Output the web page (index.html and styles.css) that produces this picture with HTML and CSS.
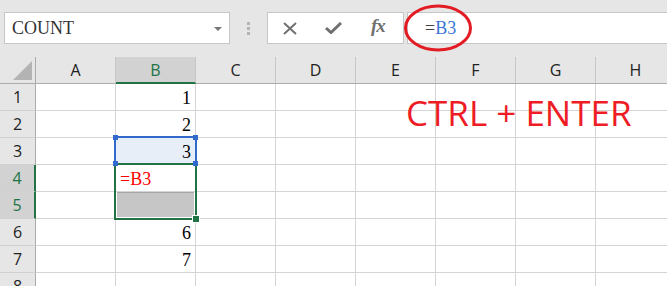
FILE: index.html
```html
<!DOCTYPE html>
<html lang="zh-Hant">
<head>
  <meta charset="UTF-8">
  <title>COUNT</title>
  <link rel="stylesheet" href="styles.css">
</head>
<body>
<div class="toolbar">
  <div class="namebox"><span class="name">COUNT</span><span class="caret"></span></div>
  <div class="grip"><i></i><i></i><i></i></div>
  <div class="fbtns">
    <svg class="icon" width="14" height="13" viewBox="0 0 14 13"><path d="M1 1 L13 12 M13 1 L1 12" stroke="#707070" stroke-width="2" fill="none"/></svg>
    <svg class="icon" width="17" height="12" viewBox="0 0 17 12"><path d="M1 6 L6 10.5 L16 1" stroke="#707070" stroke-width="3" fill="none"/></svg>
    <span class="fx">fx</span>
  </div>
  <div class="fbox"><span class="eq">=</span><span class="ref">B3</span></div>
  <svg class="ring" width="72" height="52" viewBox="0 0 72 52"><ellipse cx="36" cy="25" rx="32.5" ry="22" stroke="#e31b23" stroke-width="3" fill="none"/></svg>
</div>

<div class="sheet">
  <div class="corner"><span class="tri"></span></div>
  <div class="colhead">A</div>
  <div class="colhead on">B</div>
  <div class="colhead">C</div>
  <div class="colhead">D</div>
  <div class="colhead">E</div>
  <div class="colhead">F</div>
  <div class="colhead">G</div>
  <div class="colhead">H</div>

  <div class="rowhead">1</div><div class="cell"></div><div class="cell num">1</div><div class="cell"></div><div class="cell"></div><div class="cell"></div><div class="cell"></div><div class="cell"></div><div class="cell"></div>
  <div class="rowhead">2</div><div class="cell"></div><div class="cell num">2</div><div class="cell"></div><div class="cell"></div><div class="cell"></div><div class="cell"></div><div class="cell"></div><div class="cell"></div>
  <div class="rowhead">3</div><div class="cell"></div><div class="cell num active">3</div><div class="cell"></div><div class="cell"></div><div class="cell"></div><div class="cell"></div><div class="cell"></div><div class="cell"></div>
  <div class="rowhead on">4</div><div class="cell"></div><div class="cell edit">=B3</div><div class="cell"></div><div class="cell"></div><div class="cell"></div><div class="cell"></div><div class="cell"></div><div class="cell"></div>
  <div class="rowhead on">5</div><div class="cell"></div><div class="cell"><span class="shade"></span></div><div class="cell"></div><div class="cell"></div><div class="cell"></div><div class="cell"></div><div class="cell"></div><div class="cell"></div>
  <div class="rowhead">6</div><div class="cell"></div><div class="cell num">6</div><div class="cell"></div><div class="cell"></div><div class="cell"></div><div class="cell"></div><div class="cell"></div><div class="cell"></div>
  <div class="rowhead">7</div><div class="cell"></div><div class="cell num">7</div><div class="cell"></div><div class="cell"></div><div class="cell"></div><div class="cell"></div><div class="cell"></div><div class="cell"></div>
  <div class="rowhead">8</div><div class="cell"></div><div class="cell"></div><div class="cell"></div><div class="cell"></div><div class="cell"></div><div class="cell"></div><div class="cell"></div><div class="cell"></div>

  <!-- selection frames -->
  <div class="frame-blue"></div>
  <div class="frame-green"></div>
  <span class="knob k1"></span>
  <span class="knob k2"></span>
  <span class="knob k3"></span>
  <span class="knob k4"></span>
  <span class="knob fillk"></span>

  <div class="note">CTRL + ENTER</div>
</div>
</body>
</html>
```

FILE: styles.css
```css
*{margin: 0;padding: 0;box-sizing: border-box;}
body{
  width: 667px;
  height: 286px;
  overflow: hidden;
  background: #fff;
  font-family: "Liberation Serif", serif;
}

/* 上方工具列 */
.toolbar{
  position: relative;
  height: 57px;
  background: #e6e6e6;
  display: flex;
  align-items: flex-start;
  padding: 12px 0 0 4px;
}
.namebox{
  width: 226px;
  height: 32px;
  background: #fff;
  border: 1px solid #c6c6c6;
  display: flex;
  align-items: center;
  justify-content: space-between;
  padding: 0 7px 0 7px;
}
.name{
  font-size: 18px;
  color: #333;
}
.caret{
  border-left: 4px solid transparent;
  border-right: 4px solid transparent;
  border-top: 4px solid #777;
  margin-top: 1px;
}
.grip{
  width: 37px;
  height: 32px;
  display: flex;
  flex-direction: column;
  align-items: center;
  justify-content: center;
  gap: 2px;
}
.grip i{
  width: 3px;
  height: 3px;
  background: #b4b4b4;
}
.fbtns{
  width: 137px;
  height: 32px;
  background: #fff;
  border: 1px solid #c6c6c6;
  display: flex;
  align-items: center;
  padding-left: 15px;
  gap: 28px;
}
.fx{
  font-style: italic;
  font-size: 19px;
  color: #707070;
  font-weight: bold;
  letter-spacing: -1px;
  margin-top: -4px;
  margin-left: 1px;
}
.fbox{
  flex: 1;
  height: 32px;
  margin-left: 3px;
  background: #fff;
  border: 1px solid #c6c6c6;
  border-right: none;
  padding-left: 17px;
  font-size: 18px;
  line-height: 30px;
}
.eq{ color: #444; }
.ref{ color: #3a76d6; }
.ring{
  position: absolute;
  left: 402px;
  top: 3px;
}

/* 表格 */
.sheet{
  position: relative;
  display: grid;
  grid-template-columns: 36px repeat(8, 80px);
  grid-template-rows: repeat(9, 27px);
}
.corner{
  background: #e6e6e6;
  border-right: 1px solid #ababab;
  border-bottom: 1px solid #ababab;
  position: relative;
}
.tri{
  position: absolute;
  right: 3px;
  bottom: 3px;
  border-left: 19px solid transparent;
  border-bottom: 19px solid #b3b3b3;
}
.colhead{
  background: #e6e6e6;
  border-right: 1px solid #c6c6c6;
  border-bottom: 1px solid #ababab;
  font-family: "Open Sans", sans-serif;
  font-size: 16px;
  color: #222;
  text-align: center;
  line-height: 27px;
}
.colhead.on{
  background: #d2d2d2;
  color: #217346;
  border-bottom: 2px solid #217346;
}
.rowhead{
  background: #e6e6e6;
  border-right: 1px solid #ababab;
  border-bottom: 1px solid #d0d0d0;
  font-family: "Open Sans", sans-serif;
  font-size: 16px;
  color: #222;
  text-align: center;
  line-height: 26px;
}
.rowhead.on{
  background: #d2d2d2;
  color: #217346;
  border-right: 2px solid #217346;
}
.cell{
  border-right: 1px solid #d4d4d4;
  border-bottom: 1px solid #d4d4d4;
  font-size: 18px;
  line-height: 28px;
  position: relative;
}
.num{
  text-align: right;
  padding-right: 4px;
}
.active{
  background: #e8eef8;
}
.edit{
  color: #f00;
  padding-left: 4px;
}
.shade{
  position: absolute;
  left: 1px;
  right: 1px;
  top: 0;
  bottom: 1px;
  background: #c6c6c6;
  border-top: 1px solid #a6a6a6;
}

/* 選取框 */
.frame-blue{
  position: absolute;
  left: 114px;
  top: 79px;
  width: 83px;
  height: 29px;
  border: 2px solid #3169cc;
}
.frame-green{
  position: absolute;
  left: 114px;
  top: 106px;
  width: 83px;
  height: 57px;
  border: 2px solid #217346;
}
.knob{
  position: absolute;
  width: 5px;
  height: 5px;
  background: #3169cc;
}
.k1{ left: 113px; top: 78px; }
.k2{ left: 193px; top: 78px; }
.k3{ left: 113px; top: 104px; }
.k4{ left: 193px; top: 104px; }
.fillk{
  left: 193px;
  top: 159px;
  width: 6px;
  height: 6px;
  background: #217346;
  outline: 1px solid #fff;
}

.note{
  position: absolute;
  left: 406px;
  top: 32px;
  font-family: "Open Sans", sans-serif;
  font-size: 35px;
  color: #ee1c25;
  white-space: nowrap;
}
```
